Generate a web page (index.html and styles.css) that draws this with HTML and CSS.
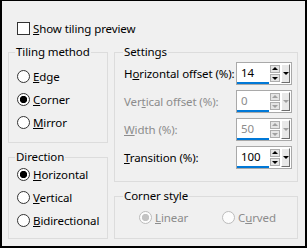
FILE: index.html
```html
<!DOCTYPE html>
<html>
<head>
<meta charset="utf-8">
<link rel="stylesheet" href="styles.css">
</head>
<body>
<div class="dlg">
  <div class="chk"><span class="box"></span><span class="txt"><u>S</u>how tiling preview</span></div>
  <div class="cols">
    <div class="left">
      <fieldset class="grp tiling">
        <legend><span>Tiling method</span></legend>
        <div class="radios">
          <div class="radio"><span class="rb"></span><span><u>E</u>dge</span></div>
          <div class="radio"><span class="rb on"></span><span><u>C</u>orner</span></div>
          <div class="radio"><span class="rb"></span><span><u>M</u>irror</span></div>
        </div>
      </fieldset>
      <fieldset class="grp dir">
        <legend><span>Direction</span></legend>
        <div class="radios">
          <div class="radio"><span class="rb on"></span><span><u>H</u>orizontal</span></div>
          <div class="radio"><span class="rb"></span><span><u>V</u>ertical</span></div>
          <div class="radio"><span class="rb"></span><span><u>B</u>idirectional</span></div>
        </div>
      </fieldset>
    </div>
    <div class="right">
      <fieldset class="grp settings">
        <legend class="rl"><span>Settings</span></legend>
        <div class="rows">
          <div class="row"><span class="lbl">H<u>o</u>rizontal offset (%):</span>
            <div class="spin"><span class="val">14</span><span class="ud"><i class="up"></i><i class="dn"></i></span><span class="dd"><i></i></span></div></div>
          <div class="row dis"><span class="lbl">Ver<u>t</u>ical offset (%):</span>
            <div class="spin"><span class="val">0</span><span class="ud"><i class="up"></i><i class="dn"></i></span><span class="dd"><i></i></span></div></div>
          <div class="row dis"><span class="lbl"><u>W</u>idth (%):</span>
            <div class="spin"><span class="val">50</span><span class="ud"><i class="up"></i><i class="dn"></i></span><span class="dd"><i></i></span></div></div>
          <div class="row"><span class="lbl"><u>T</u>ransition (%):</span>
            <div class="spin"><span class="val">100</span><span class="ud"><i class="up"></i><i class="dn"></i></span><span class="dd"><i></i></span></div></div>
        </div>
      </fieldset>
      <fieldset class="grp corner">
        <legend class="rl"><span>Corner style</span></legend>
        <div class="cradios">
          <div class="radio dis"><span class="rb on"></span><span><u>L</u>inear</span></div>
          <div class="radio dis"><span class="rb"></span><span>C<u>u</u>rved</span></div>
        </div>
      </fieldset>
    </div>
  </div>
</div>
</body>
</html>
```

FILE: styles.css
```css
html, body {
  margin: 0;
  padding: 0;
  background: #f0f0f0;
}
.dlg {
  width: 307px;
  height: 248px;
  box-sizing: border-box;
  border: 2px solid #000;
  border-top-width: 1px;
  background: #f0f0f0;
  font-family: "Segoe UI", "Noto Sans", "Open Sans", sans-serif;
  font-size: 11.5px;
  letter-spacing: -0.1px;
  color: #000;
  padding-top: 19px;
  white-space: nowrap;
}
u { text-decoration: underline; text-underline-offset: 1px; }
.chk {
  display: flex;
  align-items: center;
  height: 17px;
  margin-left: 15px;
}
.box {
  width: 13px;
  height: 13px;
  box-sizing: border-box;
  border: 1px solid #333;
  background: #fff;
  margin-right: 3px;
}
.cols {
  display: flex;
  margin-top: 7px;
  margin-left: 6px;
  gap: 6px;
}
.left { width: 100px; display: flex; flex-direction: column; }
.right { width: 184px; display: flex; flex-direction: column; }
.grp {
  margin: 0;
  padding: 0;
  border: 1px solid #dcdcdc;
  min-width: 0;
}
legend {
  margin-left: 6px;
  padding: 0 1px;
  line-height: 16px;
  height: 16px;
}
legend.rl { margin-left: 8px; }
.tiling { height: 99px; box-sizing: border-box; }
.dir { height: 90px; box-sizing: border-box; margin-top: 6px; }
.radios {
  display: flex;
  flex-direction: column;
  padding: 5px 0 0 8px;
}
.dir .radios { padding-top: 0; margin-top: -2px; }
.radio {
  display: flex;
  align-items: center;
  height: 23px;
}
.rb {
  width: 13px;
  height: 13px;
  box-sizing: border-box;
  border-radius: 50%;
  border: 1px solid #333;
  background: #fff;
  margin-right: 3px;
  flex: none;
}
.rb.on {
  background: radial-gradient(circle, #000 0 3.4px, #fff 3.9px);
}
.radio.dis { color: #8c8c8c; }
.radio.dis .rb { border-color: #bcbcbc; background: #fcfcfc; }
.radio.dis .rb.on { background: radial-gradient(circle, #c3c3c3 0 3.4px, #fcfcfc 3.9px); }
.settings { height: 138px; box-sizing: border-box; }
.rows {
  display: flex;
  flex-direction: column;
  gap: 5px;
  padding: 2px 5px 0 9px;
}
.row {
  display: flex;
  align-items: center;
  justify-content: space-between;
  height: 23px;
}
.row.dis .lbl { color: #8c8c8c; }
.spin {
  display: flex;
  width: 56px;
  height: 23px;
  box-sizing: border-box;
  border: 1px solid #a9a9a9;
  background: #fff;
  flex: none;
}
.val {
  flex: 1;
  border-bottom: 2px solid #0078d7;
  padding-left: 4px;
  line-height: 20px;
  margin-right: 1px;
}
.row.dis .val { color: #8c8c8c; }
.ud {
  width: 10px;
  display: flex;
  flex-direction: column;
  justify-content: center;
  gap: 1px;
  margin-right: 1px;
}
.ud i {
  position: relative;
  height: 8px;
  box-sizing: border-box;
  border: 1px solid #adadad;
  background: #e5e5e5;
  display: block;
}
.ud i::after {
  content: "";
  position: absolute;
  left: 1px;
  top: 1px;
  border-left: 3px solid transparent;
  border-right: 3px solid transparent;
}
.ud .up::after { border-bottom: 3px solid #000; }
.ud .dn::after { border-top: 3px solid #000; top: 2px; }
.row.dis .ud .up::after { border-bottom-color: #a0a0a0; }
.row.dis .ud .dn::after { border-top-color: #a0a0a0; }
.dd {
  width: 9px;
  margin: 1px 1px 1px 0;
  box-sizing: border-box;
  border: 1px solid;
  border-color: #fff #6d6d6d #6d6d6d #fff;
  background: #e8e8e8;
  display: flex;
  align-items: center;
  justify-content: center;
}
.dd i {
  border-left: 3px solid transparent;
  border-right: 3px solid transparent;
  border-top: 3px solid #000;
}
.row.dis .dd i { border-top-color: #a0a0a0; }
.corner {
  height: 51px;
  box-sizing: border-box;
  margin-top: 6px;
}
.cradios {
  display: flex;
  padding: 2px 0 0 24px;
}
.cradios .radio:first-child { width: 83px; }
```
